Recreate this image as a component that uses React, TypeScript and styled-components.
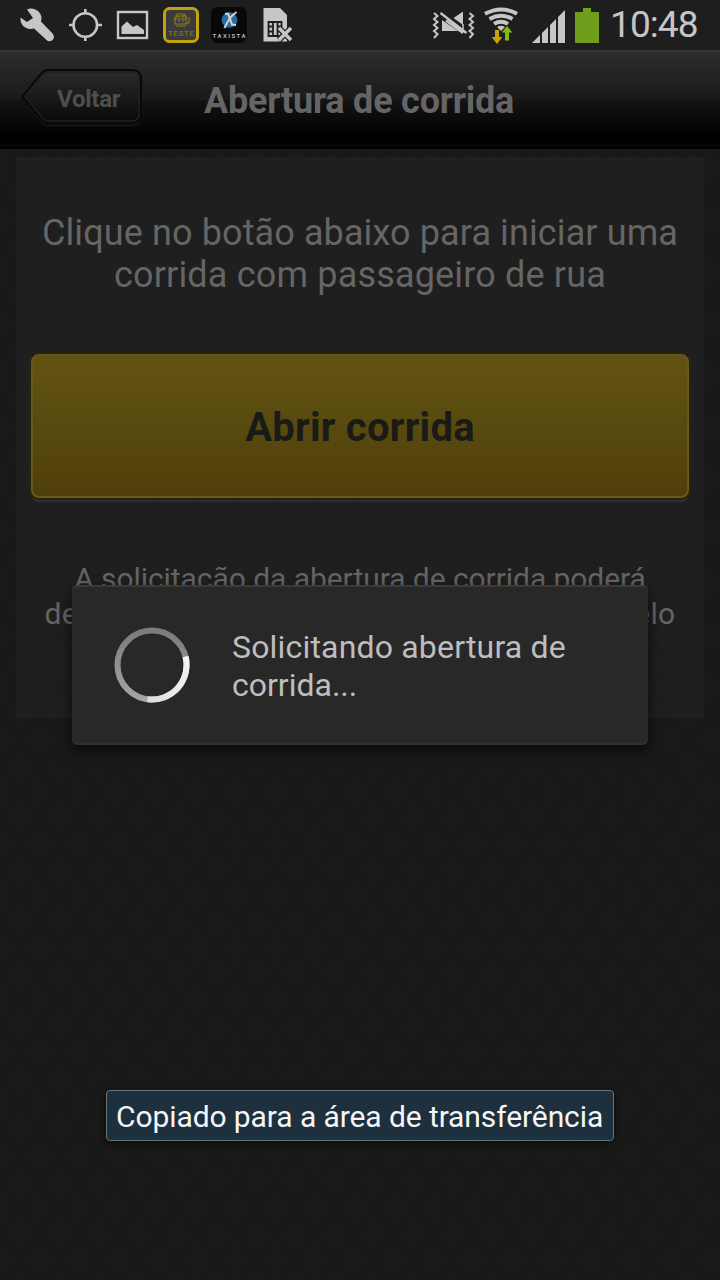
import React from 'react';
import styled, { createGlobalStyle } from 'styled-components';

const Global = createGlobalStyle`
  * { box-sizing: border-box; }
  body { margin: 0; background: #191919; font-family: Roboto, "Liberation Sans", sans-serif; }
`;

const Screen = styled.div`
  position: relative;
  width: 720px;
  height: 1280px;
  overflow: hidden;
  background: #191919;
`;
const Texture = styled.svg`
  position: absolute;
  inset: 0;
`;
const Page = styled.div`
  position: relative;
  display: flex;
  flex-direction: column;
`;
const StatusBar = styled.header`
  height: 50px;
  display: flex;
  justify-content: space-between;
  background: #1e1e1e;
`;
const IconStrip = styled.svg`
  display: block;
  flex: none;
`;
const StatusRight = styled.div`
  display: flex;
`;
const Clock = styled.time`
  width: 110px;
  font-size: 37px;
  line-height: 50px;
  letter-spacing: -0.9px;
  color: #c6c6c6;
  white-space: nowrap;
`;
const TitleBar = styled.nav`
  height: 99px;
  display: grid;
  grid-template-columns: 204px 1fr;
  border-top: 2px solid #353535;
  background: linear-gradient(#2d2d2d 0%, #1a1a1a 48%, #131313 51%, #000 89%, #000 94%, #0b0b0b 96%, #000 98%);
`;
const BackButton = styled.button`
  position: relative;
  width: 128px;
  height: 64px;
  margin: 15px 0 0 18px;
  padding: 0;
  border: 0;
  background: none;
  color: #4e4e4e;
  font: bold 24px/60px Roboto, "Liberation Sans", sans-serif;
  text-align: left;
  text-indent: 39px;
  letter-spacing: -0.25px;
`;
const BackShape = styled.svg`
  position: absolute;
  inset: 0;
`;
const BackLabel = styled.span`
  position: relative;
`;
const Title = styled.h1`
  margin: 0;
  font-size: 36px;
  line-height: 99px;
  letter-spacing: -0.22px;
  color: #656565;
  white-space: nowrap;
`;
const Panel = styled.main`
  height: 561px;
  margin: 8px 16px 0;
  padding: 55px 15px 0;
  background: rgba(255, 255, 255, 0.026);
  color: #656565;
  text-align: center;
`;
const Lead = styled.p`
  margin: 0 -10px;
  font-size: 36px;
  line-height: 42px;
`;
const OpenButton = styled.button`
  display: block;
  width: 658px;
  height: 144px;
  margin: 58px 0 0;
  padding: 4px 0 0;
  border: 2px solid #635821;
  border-radius: 8px;
  background: linear-gradient(#635312, #5b4d10 35%, #503f09);
  box-shadow: 0 0 0 2px #29220b, 0 3px 0 1px #2d2d2d;
  color: #1a1a18;
  font: bold 40px/1 Roboto, "Liberation Sans", sans-serif;
  letter-spacing: 0.25px;
`;
const Note = styled.p`
  margin: 63px -10px 0;
  font-size: 30px;
  line-height: 35px;
`;
const Line = styled.span<{ $spacing?: number }>`
  display: block;
  white-space: nowrap;
  letter-spacing: ${(p) => p.$spacing ?? 0}px;
`;
const Dialog = styled.section`
  position: absolute;
  left: 72px;
  top: 585px;
  width: 576px;
  height: 160px;
  display: flex;
  align-items: center;
  padding-left: 40px;
  gap: 40px;
  border-radius: 5px;
  border-top: 2px solid #3a3a3a;
  border-bottom: 2px solid #313131;
  background: #282828;
  box-shadow: 0 5px 14px rgba(0, 0, 0, 0.65);
`;
const Message = styled.p`
  margin: 1px 0 0;
  font-size: 32px;
  line-height: 38px;
  color: #bebebe;
`;
const Toast = styled.div`
  position: absolute;
  left: 106px;
  top: 1090px;
  width: 508px;
  height: 51px;
  padding-left: 9px;
  border: 1px solid #66737b;
  border-radius: 4px;
  background: #1e2f3d;
  box-shadow: 0 2px 7px rgba(0, 0, 0, 0.6);
  color: #f4f6f7;
  font-size: 30px;
  line-height: 51px;
  letter-spacing: -0.09px;
  white-space: nowrap;
`;

const Notifications = () => (
  <IconStrip width="300" height="50" viewBox="0 0 300 50">
    <path d="M27 9.500C31 7.500 36 9 39 12c2.500 3 3 6 2 9.500L52.500 33.500a4.200 4.200 0 0 1-6 6.500L34 28.500c-8 2-14-3-13.500-11l6.500 4.500 6-4z" fill="#c6c6c6" />
    <g fill="none" stroke="#c6c6c6" strokeWidth="2.600">
      <circle cx="85.300" cy="25" r="11.800" />
      <path d="M85.300 9v5M85.300 36v5M69 25h5M97 25h5" />
    </g>
    <rect x="118" y="12" width="29" height="26" fill="none" stroke="#c6c6c6" strokeWidth="2.400" />
    <path d="M121.500 34v-7.500l5.500-5 6 5.500 4-2 7 5v4z" fill="#c6c6c6" />
    <rect x="164.500" y="8.500" width="33" height="33" rx="5" fill="#3b3b3b" stroke="#c0a30d" strokeWidth="3" />
    <g fill="none" stroke="#8f7b1c" strokeWidth="1.100">
      <path d="M176 17v-2l2-1h6l2 2v2M174 19l3-3h8l2 3M175 19h11v5h-11zM176 26h10M178 21h2M182 21h2M179 16v2M183 15v3M187 24l2-2v-5" />
    </g>
    <text x="168" y="36" fontSize="8" textLength="26" lengthAdjust="spacing" fill="#8f7b1c" fontFamily="Roboto, sans-serif">TESTE</text>
    <rect x="211" y="7" width="36" height="36" rx="7" fill="#080808" />
    <circle cx="229.500" cy="20" r="7.800" fill="#2d6c9e" />
    <path d="M225 14l3-.5 4 11 4 .5M236.500 12c-6 4-9 9-12 16" stroke="#d0d5d8" strokeWidth="2" fill="none" />
    <text x="212.500" y="38" fontSize="6" fontWeight="bold" textLength="33" fill="#b7b7b7" fontFamily="Roboto, sans-serif">TAXISTA</text>
    <path d="M263.500 8H280l7 7v26.500h-23.500z" fill="#c6c6c6" />
    <path d="M268.500 22h13v14h-13zM268 26.500h5M268 31.500h5M277 26.500h5M277 31.500h5M273 22v15M277.500 22v15" fill="none" stroke="#1e1e1e" strokeWidth="1.800" />
    <path d="M279 28l12 12M291 28l-12 12" stroke="#1e1e1e" strokeWidth="6" />
    <path d="M279 28l12 12M291 28l-12 12" stroke="#c6c6c6" strokeWidth="3.500" />
  </IconStrip>
);

const Indicators = () => (
  <IconStrip width="180" height="50" viewBox="430 0 180 50">
    <g fill="none" stroke="#c6c6c6" strokeWidth="2">
      <path d="M434 13l3.500 3-3.500 3 3.500 3-3.500 3 3.500 3-3.500 3 3.500 3-3.500 4" />
      <path d="M469.500 13l3.500 3-3.500 3 3.500 3-3.500 3 3.500 3-3.500 3 3.500 3-3.500 4" />
    </g>
    <path d="M453.500 18l9.500-6.500V25zM442 20l16 11h-16z" fill="#c6c6c6" />
    <path d="M440.500 13l26 20M446 20.500l17 12.500" stroke="#c6c6c6" strokeWidth="2.300" />
    <path d="M463 24v5" stroke="#c6c6c6" strokeWidth="1.500" />
    <g fill="none" stroke="#c6c6c6" strokeWidth="4">
      <path d="M485 13.800q16-8.800 32 0" />
      <path d="M489.500 18.900q11.500-6.400 23 0" />
      <path d="M494 23.900q7-4.300 14 0" />
    </g>
    <path d="M497 27q4-2.300 8 0l-4 4z" fill="#c6c6c6" />
    <path d="M495 30h4v7h3.300l-5.300 7-5.300-7h3.300z" fill="#c9a400" />
    <path d="M505 40.500h4v-8h3.300L507 26l-5.300 6.500h3.300z" fill="#82ba0b" />
    <path d="M532 43l8-8v8zM542 33l6-6v16h-6zM550 25l6-6v24h-6zM558 17l7-7v33h-7z" fill="#c6c6c6" />
    <path d="M583 8h8v4h8v31h-24V12h8z" fill="#6e9e1b" />
  </IconStrip>
);

const Spinner = () => (
  <svg width="80" height="80" viewBox="0 0 80 80">
    <defs>
      <linearGradient id="track" x2="0" y2="1">
        <stop stopColor="#7b7b7b" />
        <stop offset="1" stopColor="#a5a5a5" />
      </linearGradient>
      <linearGradient id="arc" x1="1" x2="0" y2="1">
        <stop stopColor="#f6f6f6" />
        <stop offset="1" stopColor="#dedede" />
      </linearGradient>
    </defs>
    <circle cx="40" cy="40" r="34.500" fill="none" stroke="url(#track)" strokeWidth="6" />
    <path d="M73.600 31.600A34.500 34.500 0 0 1 35.500 74.200" fill="none" stroke="url(#arc)" strokeWidth="6" />
  </svg>
);

export default function App() {
  return (
    <Screen>
      <Global />
      <Texture width="720" height="1280">
        <defs>
          <pattern id="diamonds" width="39.400" height="52" y="38" patternUnits="userSpaceOnUse">
            <path d="M0 0L39.400 52M39.400 0L0 52" stroke="#161616" strokeWidth="1.300" />
          </pattern>
        </defs>
        <rect width="720" height="1280" fill="url(#diamonds)" />
      </Texture>
      <Page>
        <StatusBar>
          <Notifications />
          <StatusRight>
            <Indicators />
            <Clock>10:48</Clock>
          </StatusRight>
        </StatusBar>
        <TitleBar>
          <BackButton>
            <BackShape width="128" height="64">
              <defs>
                <linearGradient id="back" x2="0" y2="1">
                  <stop stopColor="#2b2b2b" />
                  <stop offset="0.550" stopColor="#181818" />
                  <stop offset="1" stopColor="#080808" />
                </linearGradient>
              </defs>
              <path d="M30 5H114Q123 5 123 13V49Q123 58.500 114 58.500H30Q26 58.500 23 54L4.500 31 23 9Q26 5 30 5Z" fill="none" stroke="#141414" strokeWidth="2" />
              <path d="M30 3H114Q123 3 123 12V48Q123 56 114 56H30Q26 56 23 52L4.500 29.500 23 7Q26 3 30 3Z" fill="url(#back)" stroke="#080808" strokeWidth="2" />
              <path d="M30 5H114Q121 5 121 12V47Q121 54 114 54H30Q27 54 24.500 51L7 29.500 24.500 8Q27 5 30 5Z" fill="none" stroke="#202020" strokeWidth="1.500" />
            </BackShape>
            <BackLabel>Voltar</BackLabel>
          </BackButton>
          <Title>Abertura de corrida</Title>
        </TitleBar>
        <Panel>
          <Lead>
            <Line $spacing={0.11}>Clique no botão abaixo para iniciar uma</Line>
            <Line $spacing={0.17}>corrida com passageiro de rua</Line>
          </Lead>
          <OpenButton>Abrir corrida</OpenButton>
          <Note>
            <Line $spacing={-0.06}>A solicitação da abertura de corrida poderá</Line>
            <Line $spacing={0.28}>demorar até que seja confirmada e aceita pelo</Line>
          </Note>
        </Panel>
      </Page>
      <Dialog>
        <Spinner />
        <Message>
          <Line $spacing={0.18}>Solicitando abertura de</Line>
          <Line>corrida...</Line>
        </Message>
      </Dialog>
      <Toast>Copiado para a área de transferência</Toast>
    </Screen>
  );
}
